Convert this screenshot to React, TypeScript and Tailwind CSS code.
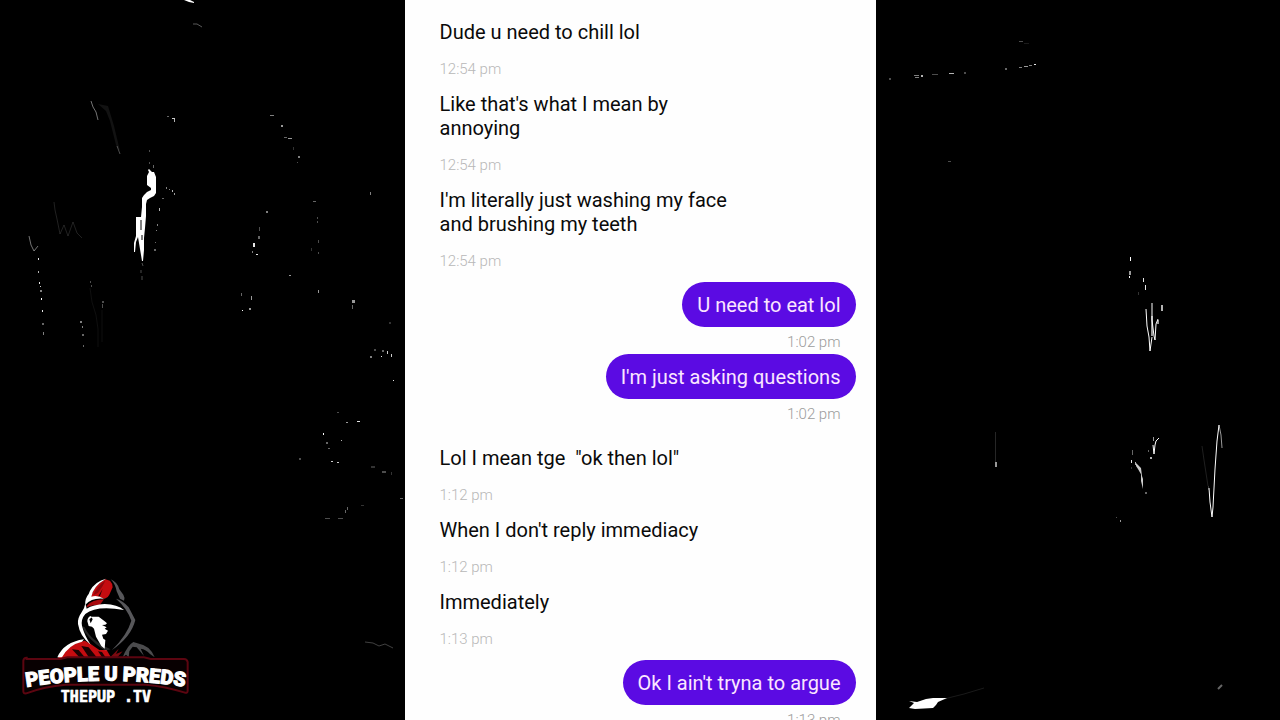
import React from "react";
import clsx from "clsx";

/* =========================================================
 * Types
 * =======================================================*/
type Message = {
  text: string;
  time: string;
};

type MessageGroup = {
  from: "them" | "me";
  messages: Message[];
};

// x, y, width, height, opacity
type Speck = [number, number, number, number, number];

/* =========================================================
 * Data
 * =======================================================*/
const CONVERSATION: MessageGroup[] = [
  {
    from: "them",
    messages: [
      { text: "Dude u need to chill lol", time: "12:54 pm" },
      { text: "Like that's what I mean by annoying", time: "12:54 pm" },
      { text: "I'm literally just washing my face and brushing my teeth", time: "12:54 pm" },
    ],
  },
  {
    from: "me",
    messages: [
      { text: "U need to eat lol", time: "1:02 pm" },
      { text: "I'm just asking questions", time: "1:02 pm" },
    ],
  },
  {
    from: "them",
    messages: [
      { text: 'Lol I mean tge  "ok then lol"', time: "1:12 pm" },
      { text: "When I don't reply immediacy", time: "1:12 pm" },
      { text: "Immediately", time: "1:13 pm" },
    ],
  },
  {
    from: "me",
    messages: [{ text: "Ok I ain't tryna to argue", time: "1:13 pm" }],
  },
];

const LEFT_SPECKS: Speck[] = [
  [167, 116, 2, 1, 0.4], [172, 118, 3, 1, 0.8], [174, 119, 1, 3, 0.7],
  [149, 150, 1, 2, 0.3], [149, 162, 1, 2, 0.3], [153, 165, 1, 3, 0.4],
  [166, 187, 1, 2, 0.5], [169, 189, 1, 1, 0.5], [172, 190, 1, 2, 0.7], [174, 193, 1, 2, 0.6], [162, 198, 2, 1, 0.4],
  [159, 208, 1, 3, 0.7], [157, 224, 1, 2, 0.5], [156, 230, 1, 1, 0.5], [155, 242, 1, 1, 0.4], [154, 249, 2, 2, 0.4],
  [270, 115, 4, 1, 0.5], [281, 125, 2, 2, 0.6], [284, 137, 3, 1, 0.4], [288, 138, 4, 1, 0.6],
  [293, 147, 1, 3, 0.2], [298, 156, 2, 2, 0.5], [297, 162, 1, 1, 0.3],
  [313, 201, 3, 1, 0.4], [317, 217, 1, 2, 0.3], [317, 221, 1, 2, 0.3], [318, 240, 1, 3, 0.3], [311, 248, 1, 3, 0.2], [318, 252, 1, 2, 0.3],
  [266, 211, 2, 2, 0.5], [259, 227, 1, 4, 0.3], [258, 236, 2, 3, 0.4], [253, 243, 2, 4, 0.9], [252, 251, 1, 2, 0.5], [256, 254, 2, 1, 0.9],
  [370, 192, 1, 3, 0.5], [289, 275, 2, 1, 0.6],
  [38, 258, 1, 2, 0.9], [38, 271, 1, 2, 0.7], [39, 282, 1, 2, 0.9], [40, 286, 1, 1, 0.8], [40, 290, 2, 2, 0.5],
  [41, 298, 1, 2, 1], [42, 310, 1, 2, 0.9], [42, 323, 2, 2, 0.4], [43, 332, 1, 3, 0.5],
  [80, 321, 2, 2, 0.5], [82, 326, 1, 2, 0.5], [82, 334, 2, 2, 0.4], [83, 345, 1, 2, 0.4],
  [90, 281, 1, 2, 0.3], [91, 285, 1, 2, 0.3], [102, 301, 2, 2, 0.3], [102, 304, 1, 4, 0.3],
  [241, 293, 1, 3, 0.4], [251, 296, 1, 4, 0.6], [242, 310, 1, 1, 1], [249, 308, 2, 2, 0.6],
  [318, 290, 1, 3, 0.6], [352, 300, 3, 3, 0.6], [352, 305, 1, 4, 0.4],
  [389, 322, 2, 2, 0.2], [374, 349, 2, 2, 0.3], [382, 350, 2, 2, 0.4], [387, 351, 1, 3, 0.8], [391, 354, 1, 3, 0.8],
  [370, 356, 2, 2, 0.5], [381, 356, 1, 1, 0.9], [393, 380, 1, 1, 0.9],
  [337, 412, 2, 1, 0.3], [346, 422, 2, 1, 0.6], [357, 421, 3, 1, 0.9], [323, 433, 1, 2, 1], [341, 440, 1, 1, 0.7],
  [326, 442, 2, 2, 0.4], [328, 448, 2, 1, 0.4], [299, 458, 2, 2, 0.3], [331, 461, 2, 1, 0.8], [337, 462, 2, 1, 0.8],
  [371, 466, 4, 2, 0.2], [382, 471, 4, 2, 0.3], [391, 472, 1, 3, 0.2], [400, 498, 3, 1, 0.4],
  [361, 505, 3, 1, 0.2], [347, 507, 1, 3, 0.4], [345, 510, 1, 3, 0.4], [325, 518, 5, 1, 0.3], [338, 518, 5, 1, 0.3],
];

// coordinates relative to the right side's own left edge
const RIGHT_SPECKS: Speck[] = [
  [13, 78, 2, 2, 0.3], [38, 75, 5, 1, 0.5], [39, 77, 4, 1, 0.5], [45, 75, 2, 2, 0.7],
  [56, 74, 6, 1, 0.3], [73, 73, 5, 1, 0.7], [88, 72, 2, 2, 0.3], [129, 68, 2, 2, 0.4],
  [143, 67, 3, 1, 0.5], [148, 66, 4, 1, 0.6], [153, 65, 3, 1, 0.5], [158, 64, 2, 1, 0.9],
  [143, 41, 4, 1, 0.3], [148, 43, 5, 1, 0.1], [72, 161, 3, 1, 0.3],
  [254, 257, 1, 4, 1], [253, 271, 2, 4, 0.6], [253, 276, 1, 2, 1], [267, 278, 1, 4, 0.9], [269, 285, 1, 5, 0.9],
  [262, 292, 1, 3, 0.2], [285, 305, 2, 6, 0.7], [281, 320, 2, 4, 0.6],
  [119, 432, 1, 30, 0.15], [119, 462, 2, 5, 0.6],
  [256, 450, 1, 5, 0.4], [255, 460, 1, 3, 0.9], [255, 467, 1, 2, 0.2], [259, 462, 1, 3, 0.7],
  [277, 437, 1, 4, 0.6], [274, 457, 2, 2, 0.7], [272, 450, 1, 2, 0.4], [269, 492, 2, 2, 0.4],
  [244, 520, 1, 2, 0.6], [240, 517, 1, 1, 0.3], [332, 486, 1, 4, 0.2],
];

/* =========================================================
 * Scratched film background
 * =======================================================*/
function Specks({ items }: { items: Speck[] }) {
  return (
    <g fill="#fff">
      {items.map(([x, y, w, h, o], i) => (
        <rect key={i} x={x} y={y} width={w} height={h} opacity={o} />
      ))}
    </g>
  );
}

function LeftScratches() {
  return (
    <svg className="absolute top-0 left-0" width="404" height="720" viewBox="0 0 404 720" fill="none" aria-hidden="true">
      <Specks items={LEFT_SPECKS} />
      <path d="M184 0h6l4 2v1l-5-1z" fill="#fff" />
      <path d="M193 24h4l5 3" stroke="#fff" opacity=".35" />
      <path d="M91 101l2 6 3 5 2 8" stroke="#fff" opacity=".45" />
      <path d="M98 104l10 2 6 20 6 25-4-6-6-24-4-10z" fill="#fff" opacity=".07" />
      <path d="M117 146l3 8" stroke="#fff" opacity=".3" />
      <path d="M54 202l1 8 2 9 3 15 4-9 4 11 5-14 4 11 5 5" stroke="#fff" opacity=".13" />
      <path d="M29 236l2 9 3 6 4-5" stroke="#fff" opacity=".45" />
      <path d="M90 288l2 14 4 13 2 14v18M102 310v32" stroke="#fff" opacity=".06" />
      <path
        d="M149 169l3 3h2l2 5v16l-2 3-4 2-3 2-1 4v12l-1 12-1 10v12l-1 11h-1l-2-12-2-12-2 5-1 10h-1v-9l2-7v-19h5l1-10v-9l2-3 3-3 4-2v-2l-4-3v-9l2-4-1-2z"
        fill="#fff"
      />
      <path d="M141 220v10M142 235v5" stroke="#000" />
      <path d="M142 263l1 3M141 270v3M142 276v4" stroke="#fff" opacity=".3" />
      <path d="M365 642l8 1 6 3 6-2 8 4" stroke="#fff" opacity=".25" />
    </svg>
  );
}

function RightScratches() {
  return (
    <svg className="absolute top-0 left-0" width="404" height="720" viewBox="0 0 404 720" fill="none" aria-hidden="true">
      <Specks items={RIGHT_SPECKS} />
      <path d="M270 309l1 17 2 11 1 14 2-14M276 303v17l2 16 1 4 1-16 2-5" stroke="#fff" />
      <path d="M275 316h2v20h-2z" fill="#fff" opacity=".6" />
      <path d="M283 438l-3 3-1 4-1 9-1-9" stroke="#fff" />
      <path d="M260 463l2 2 3 3 1 8-4-7-2-3zM265 473l2 6v10l-2-8z" fill="#fff" opacity=".8" />
      <path d="M343 425l-2 16-2 28-2 38-1 10-2-15-1-14" stroke="#fff" />
      <path d="M343 425l2 10 1 13" stroke="#fff" opacity=".6" />
      <path d="M326 446l2 14 4 26" stroke="#fff" opacity=".12" />
      <path d="M33 708l5-5-5-2 8 1 9-3 7-1h14l-9 4-2 3-3 3-18 1z" fill="#fff" />
      <path d="M68 699l20-5 20-6" stroke="#fff" opacity=".1" />
      <path d="M342 689l4-4" stroke="#fff" strokeWidth="2" opacity=".4" />
    </svg>
  );
}

/* =========================================================
 * Channel logo
 * =======================================================*/
function ChannelLogo() {
  return (
    <svg
      className="relative mb-[10px] ml-5 block"
      width="170"
      height="135"
      viewBox="60 45 510 405"
      role="img"
      aria-label="People U Preds, thepup.tv"
    >
      <g transform="translate(210 30)">
        {/* shoulders */}
        <path d="M-36 264Q-8 222 44 212L62 222L88 240L110 240L124 264Z" fill="#c50c10" />
        <path d="M-38 262Q-18 216 42 208L36 215Q-4 224-24 262Z" fill="#fff" />
        <path d="M6 238L30 264H46L26 240ZM34 228L58 264H82L56 232ZM84 244L98 264H108L96 246Z" fill="#1c0203" />
        <path d="M122 260L146 236L138 252L158 244L140 264H118Z" fill="#7c0a10" />
        <path
          d="M158 262Q172 226 190 216L202 220Q240 226 254 262L240 252Q228 238 212 236L222 258L200 232L188 230L178 244L176 262L168 254Z"
          fill="#4b4b4d"
        />
        {/* hood crown */}
        <path d="M106 28L120 32Q128 40 128 52L118 74Q114 84 104 86Q80 76 60 92Q66 50 106 28Z" fill="#c50c10" />
        <path d="M106 32Q78 50 70 76L84 68Q98 50 106 32Z" fill="#8f070c" />
        <path d="M84 80L98 56L90 78Z" fill="#1c0203" />
        <path d="M50 108Q66 88 102 88L90 104Q66 104 50 112Z" fill="#a8090e" />
        <path
          d="M108 26Q76 34 60 62L56 72Q44 86 46 104Q66 82 102 86Q82 74 64 80Q70 48 108 26Z"
          fill="#fff"
        />
        {/* hood rim */}
        <path
          d="M46 100Q44 116 34 128Q22 144 24 162Q30 200 62 224Q44 198 36 168Q32 148 46 132Q78 106 162 120Q142 104 104 102Q70 104 50 116Z"
          fill="#fff"
        />
        <path d="M36 168Q48 206 106 242L122 238Q62 212 44 172Z" fill="#fff" opacity=".15" />
        <path
          d="M122 28Q142 36 148 58L160 74Q166 84 162 92L150 86L140 64Q136 42 122 28Z"
          fill="#57575a"
        />
        <path d="M138 86Q160 92 176 112L196 150Q184 200 126 240Q172 194 184 152Q172 116 138 86Z" fill="#57575a" />
        {/* face */}
        <path
          d="M52 154Q52 142 62 138L66 142L58 148L62 160L68 148L64 140L86 140L104 154L111 160L106 164L96 165L110 172L104 176L114 182L108 192L96 194L100 206L106 210L104 236L94 228L78 200L72 176L66 170L56 168Z"
          fill="#fff"
        />
      </g>
      {/* name plate */}
      <path
        d="M80 297h102l20-5h230l20 5h100q9 0 11 9v86q0 8-8 6-60-19-118-24H197q-64 5-118 26-9 2-9-6v-92q1-9 10-9z"
        fill="#080001"
        stroke="#5c0510"
        strokeWidth="6"
      />
      <path id="name-arc" d="M72 382Q315 342 562 382" fill="none" />
      <text
        fill="#fff"
        stroke="#fff"
        strokeWidth="3"
        fontFamily="'Liberation Sans Narrow', Roboto, sans-serif"
        fontWeight="900"
        fontSize="60"
      >
        <textPath href="#name-arc" startOffset="50%" textAnchor="middle">
          PEOPLE U PREDS
        </textPath>
      </text>
      <text
        x="318"
        y="425"
        textAnchor="middle"
        fill="#fff"
        stroke="#fff"
        strokeWidth="2"
        fontFamily="'DejaVu Sans Mono', monospace"
        fontWeight="700"
        fontSize="45"
      >
        THEPUP .TV
      </text>
    </svg>
  );
}

/* =========================================================
 * Chat
 * =======================================================*/
function MessageItem({ message, mine }: { message: Message; mine: boolean }) {
  return (
    <li className={clsx("flex flex-col", mine ? "items-end" : "items-start")}>
      <p
        className={clsx(
          "max-w-[320px] whitespace-pre-wrap px-[15px] pt-[11px] pb-[10px] text-[20px] leading-[24px]",
          mine ? "rounded-full bg-[#5b0be3] text-[#fbe6ff]" : "text-[#0a0a0a]",
        )}
      >
        {message.text}
      </p>
      <time
        className={clsx(
          "px-[15px] pt-[3px] text-[15px] leading-[24px] font-light",
          mine ? "text-[#9c9c9c]" : "text-[#b8b8b8]",
        )}
      >
        {message.time}
      </time>
    </li>
  );
}

function Conversation({ groups = CONVERSATION }: { groups?: MessageGroup[] }) {
  return (
    <section
      aria-label="Conversation"
      className="flex w-[471px] shrink-0 flex-col gap-[9px] overflow-hidden bg-[#fefefe] px-5 pt-[9px]"
    >
      {groups.map((group, i) => (
        <ul key={i} className="shrink-0">
          {group.messages.map((message) => (
            <MessageItem key={message.text} message={message} mine={group.from === "me"} />
          ))}
        </ul>
      ))}
    </section>
  );
}

export default function App() {
  return (
    <main className="flex h-screen overflow-hidden bg-black font-['Roboto',sans-serif]">
      <aside className="relative flex flex-1 items-end overflow-hidden">
        <LeftScratches />
        <ChannelLogo />
      </aside>
      <Conversation />
      <aside className="relative flex-1 overflow-hidden">
        <RightScratches />
      </aside>
    </main>
  );
}
